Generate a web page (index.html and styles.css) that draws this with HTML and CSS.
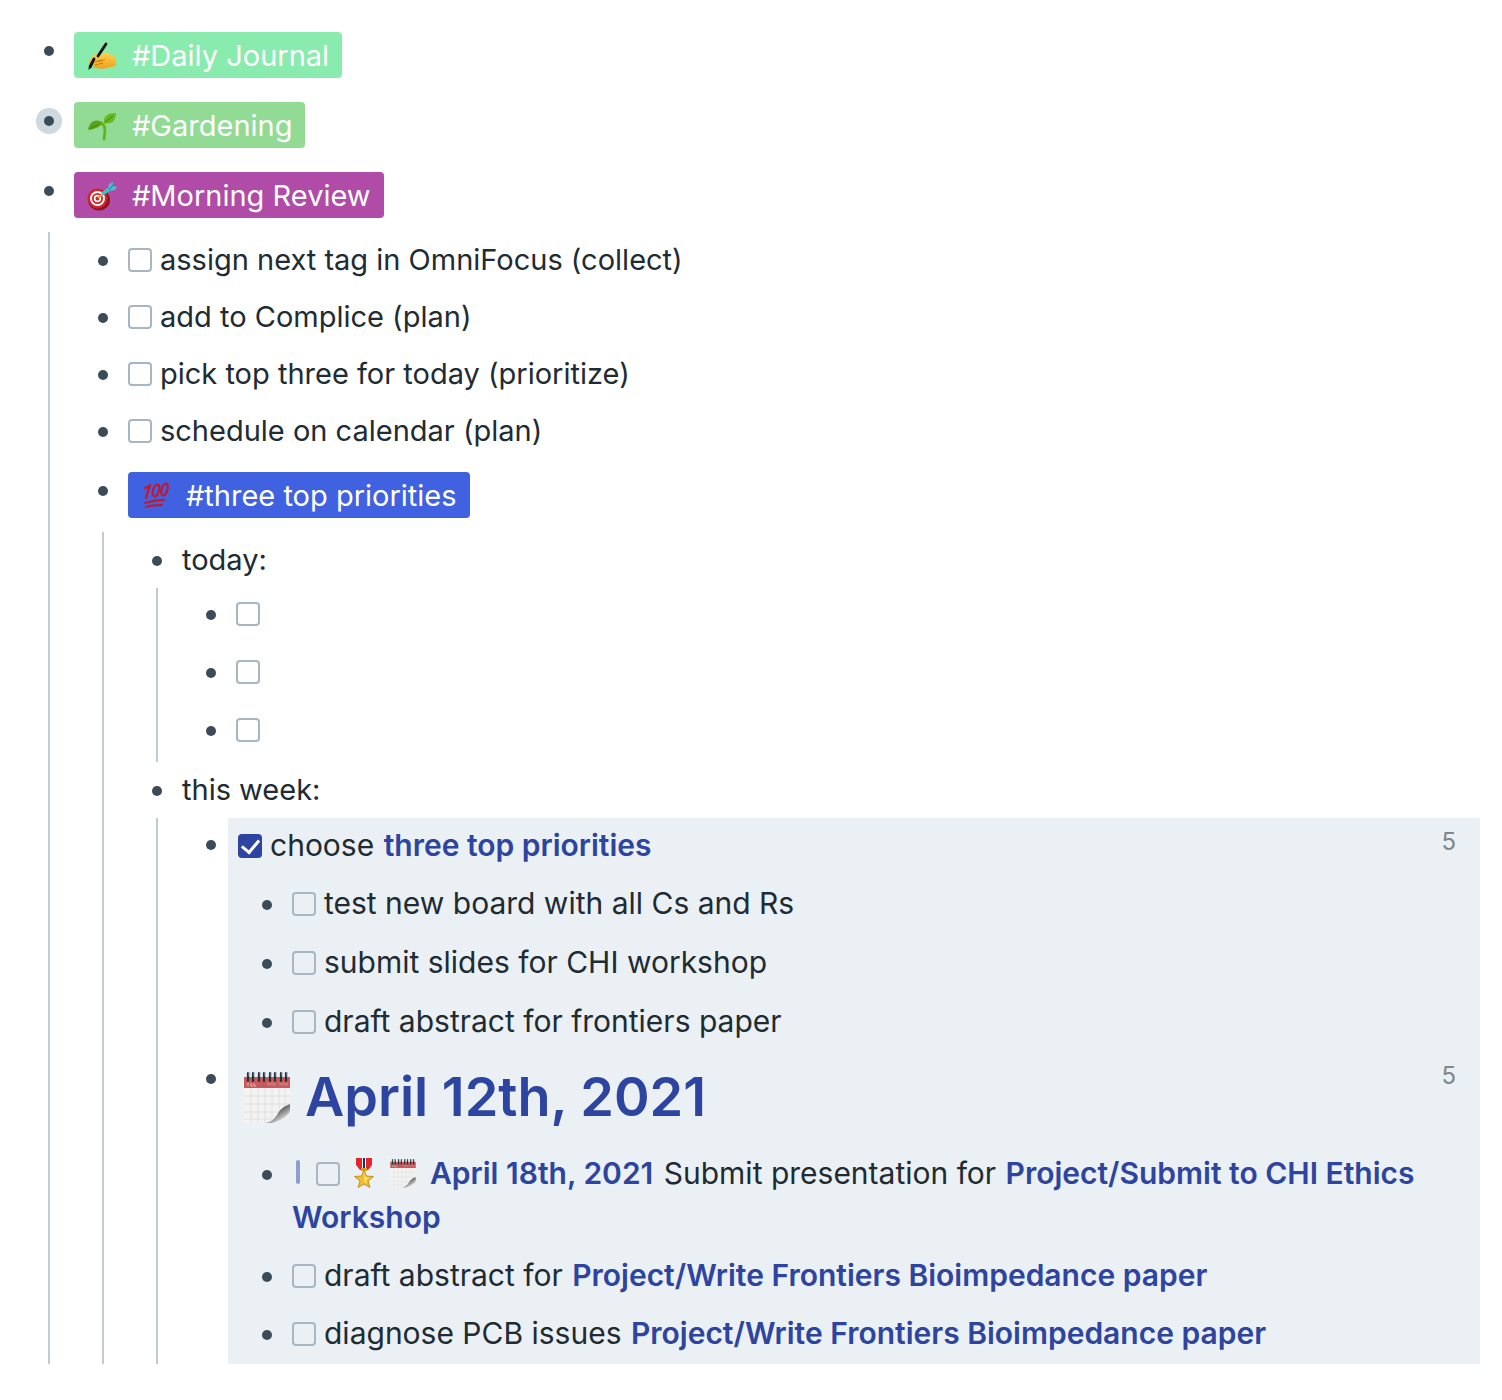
FILE: index.html
```html
<!DOCTYPE html>
<html lang="en">
<head>
<meta charset="utf-8">
<title>Daily outline</title>
<link rel="stylesheet" href="styles.css">
</head>
<body>
<svg class="sprite" width="0" height="0" aria-hidden="true">
  <defs>
    <linearGradient id="curl" x1="0.3" y1="0.3" x2="0.8" y2="0.9">
      <stop offset="0" stop-color="#555"/><stop offset="0.35" stop-color="#777"/><stop offset="1" stop-color="#f4f4f4"/>
    </linearGradient>
    <linearGradient id="skin" x1="0" y1="0" x2="0" y2="1">
      <stop offset="0" stop-color="#ffd34a"/><stop offset="1" stop-color="#f0a020"/>
    </linearGradient>
    <symbol id="calendar" viewBox="0 0 48 54">
      <path d="M1 7h46v28C43 41 37 44 33 47c-4 4-7 6-10 6H1z" fill="#f3f3f3"/>
      <path d="M8 18v35M15 18v35M22 18v35M29 18v30M36 18v27M42 18v20M1 26h46M1 34h46M1 42h38M1 49h28" stroke="#e0e0e0" fill="none"/>
      <path d="M1 7h46v11H1z" fill="#c65a5c"/>
      <path d="M5 12v4M8 13v3h2M11 13v3h2" stroke="#eab5b5" fill="none"/>
      <path d="M24 14h9M36 14h9" stroke="#cf7476" stroke-width="3"/>
      <path d="M47 34c-8 3-10 6-13 11-3 4-7 8-12 8h7c8-2 18-8 18-13z" fill="url(#curl)"/>
      <path d="M5 3v8M10 3v8M16 3v8M21 3v8M27 3v8M32 3v8M38 3v8M43 3v8" stroke="#26313c" stroke-width="2.2" stroke-linecap="round"/>
      <path d="M6 2v4M11 2v4M17 2v4M22 2v4M28 2v4M33 2v4M39 2v4M44 2v4" stroke="#8fa3b5" stroke-width="1"/>
    </symbol>
  </defs>
</svg>
<main class="page">
  <ul class="outline">
    <li>
      <div class="row row-tag"><span class="bullet"></span>
        <a class="tag tag-mint" href="#daily-journal">
          <svg class="emoji" viewBox="0 0 30 30" aria-hidden="true">
            <path d="M2 21c1-3 4-7 7-8 2-1 3 0 2 2l-2 3 6-5c3-2 5-2 7 0l7 3v9l-6 1c-4 2-9 2-14 1-3 0-3-1-2-2-3 0-4-1-3-2-2 0-3-1-2-2z" fill="url(#skin)"/>
            <path d="M8 21l7-2M8 24l8-2M11 19c1 2 4 1 7-1" stroke="#c97c0a" fill="none"/>
            <path d="M19 3L11 15M7 18L3 26" stroke="#111" stroke-width="2.8" stroke-linecap="round"/>
            <path d="M3 24l-2 5 4-3z" fill="#111"/>
          </svg>#Daily Journal</a>
      </div>
    </li>
    <li>
      <div class="row row-tag"><span class="bullet bullet-closed"></span>
        <a class="tag tag-green" href="#gardening">
          <svg class="emoji" viewBox="0 0 30 30" aria-hidden="true">
            <path d="M12 12c4 0 6 3 6 8l-1 8" stroke="#62b51b" stroke-width="2.8" fill="none" stroke-linecap="round"/>
            <path d="M17 12C16 5 21 2 29 2c0 8-5 12-12 10z" fill="#68b91f"/>
            <path d="M1 19c1-8 7-12 14-8-1 5-6 7-14 8z" fill="#5ca51b"/>
            <path d="M18 11l8-6M3 18l9-5" stroke="#438311" fill="none"/>
          </svg>#Gardening</a>
      </div>
    </li>
    <li>
      <div class="row row-tag"><span class="bullet"></span>
        <a class="tag tag-purple" href="#morning-review">
          <svg class="emoji" viewBox="0 0 30 30" aria-hidden="true">
            <ellipse cx="12" cy="19" rx="11" ry="10.5" fill="#8c1420"/>
            <circle cx="10.500" cy="17.500" r="10" fill="#d42229"/>
            <circle cx="10.500" cy="17.500" r="7.500" fill="#fff"/>
            <circle cx="10.500" cy="17.500" r="5.500" fill="#d42229"/>
            <circle cx="10.500" cy="17.500" r="3.700" fill="#fff"/>
            <circle cx="10.500" cy="17.500" r="2" fill="#d42229"/>
            <path d="M11 17l5-4" stroke="#e9a12a" stroke-width="2"/>
            <path d="M15 13l9-6" stroke="#3fc0cb" stroke-width="3.500"/>
            <path d="M21 8l1-5 4-2v4l4 1-2 3-5 1z" fill="#48bfca"/>
            <path d="M22 9l5-6" stroke="#1b7f93"/>
          </svg>#Morning Review</a>
      </div>
      <ul class="children">
        <li><div class="row"><span class="bullet"></span><label class="text"><input type="checkbox" class="check">assign next tag in OmniFocus (collect)</label></div></li>
        <li><div class="row"><span class="bullet"></span><label class="text"><input type="checkbox" class="check">add to Complice (plan)</label></div></li>
        <li><div class="row"><span class="bullet"></span><label class="text"><input type="checkbox" class="check">pick top three for today (prioritize)</label></div></li>
        <li><div class="row"><span class="bullet"></span><label class="text"><input type="checkbox" class="check">schedule on calendar (plan)</label></div></li>
        <li class="section">
          <div class="row row-tag"><span class="bullet"></span>
            <a class="tag tag-blue" href="#three-top-priorities">
              <svg class="emoji" viewBox="0 0 30 30" aria-hidden="true">
                <g fill="none" stroke="#d0121b" stroke-linecap="round" stroke-linejoin="round">
                  <path d="M4 7c2 0 4-2 5-3L5 17" stroke-width="2.200"/>
                  <ellipse cx="15" cy="9.500" rx="3" ry="6.200" transform="rotate(17 15 9.500)" stroke-width="2"/>
                  <ellipse cx="23.500" cy="8.500" rx="3" ry="6.200" transform="rotate(17 23.500 8.500)" stroke-width="2"/>
                  <path d="M4 22c6-2 12-3 19-3M5 26c5-2 10-2 16-2" stroke-width="1.800"/>
                </g>
              </svg>#three top priorities</a>
          </div>
          <ul class="children">
            <li>
              <div class="row row-parent"><span class="bullet"></span><span class="text">today:</span></div>
              <ul class="children">
                <li><div class="row row-empty"><span class="bullet"></span><span class="text"><input type="checkbox" class="check" aria-label="First priority today"></span></div></li>
                <li><div class="row row-empty"><span class="bullet"></span><span class="text"><input type="checkbox" class="check" aria-label="Second priority today"></span></div></li>
                <li><div class="row row-empty"><span class="bullet"></span><span class="text"><input type="checkbox" class="check" aria-label="Third priority today"></span></div></li>
              </ul>
            </li>
            <li>
              <div class="row row-parent"><span class="bullet"></span><span class="text">this week:</span></div>
              <ul class="children">
                <li class="embed-item"><span class="bullet"></span>
                  <div class="embed">
                    <div class="embed-head"><span class="text"><input type="checkbox" class="check" id="choose" checked><label for="choose">choose</label> <a class="ref" href="#three-top-priorities">three top priorities</a></span><span class="count">5</span></div>
                    <ul class="embed-list embed-list-loose">
                      <li><div class="row"><span class="bullet"></span><label class="text"><input type="checkbox" class="check">test new board with all Cs and Rs</label></div></li>
                      <li><div class="row"><span class="bullet"></span><label class="text"><input type="checkbox" class="check">submit slides for CHI workshop</label></div></li>
                      <li><div class="row"><span class="bullet"></span><label class="text"><input type="checkbox" class="check">draft abstract for frontiers paper</label></div></li>
                    </ul>
                  </div>
                </li>
                <li class="embed-item"><span class="bullet"></span>
                  <div class="embed">
                    <div class="embed-head"><h1 class="date"><svg class="date-icon" aria-hidden="true"><use href="#calendar"/></svg><a href="#april-12th-2021">April 12th, 2021</a></h1><span class="count">5</span></div>
                    <ul class="embed-list">
                      <li><div class="row"><span class="bullet"></span><span class="text"><span class="priority"></span><input type="checkbox" class="check" id="submit"><svg class="emoji medal" viewBox="0 0 22 30" aria-hidden="true">
                        <path d="M3 0h16v7l-4 5H7L3 7z" fill="#e3262c"/>
                        <path d="M9 0h4v12H9z" fill="#fff"/><path d="M10 0h2v12h-2z" fill="#1f2d6e"/>
                        <path d="M8 10h6v3H8z" fill="#d8a21c"/>
                        <path d="M11 12l2.500 6 7 .5-5.500 4.500 2 6.500-6-3.500-6 3.500 2-6.500L1.500 18.500 8.500 18z" fill="#f2bd28" stroke="#b98212" stroke-width=".8"/>
                        <path d="M11 14l1.500 5 4 .5-3.500 2.500 1 4-3-2.500z" fill="#ffdf6b"/>
                      </svg><svg class="emoji calendar" aria-hidden="true"><use href="#calendar"/></svg><a class="ref" href="#april-18th-2021">April 18th, 2021</a> <label for="submit">Submit presentation for</label> <a class="ref" href="#chi-ethics">Project/Submit to CHI Ethics Workshop</a></span></div></li>
                      <li><div class="row"><span class="bullet"></span><span class="text"><input type="checkbox" class="check" id="draft"><label for="draft">draft abstract for</label> <a class="ref" href="#frontiers">Project/Write Frontiers Bioimpedance paper</a></span></div></li>
                      <li><div class="row"><span class="bullet"></span><span class="text"><input type="checkbox" class="check" id="diagnose"><label for="diagnose">diagnose PCB issues</label> <a class="ref" href="#frontiers">Project/Write Frontiers Bioimpedance paper</a></span></div></li>
                    </ul>
                  </div>
                </li>
              </ul>
            </li>
          </ul>
        </li>
      </ul>
    </li>
  </ul>
</main>
</body>
</html>
```
FILE: styles.css
```css
* { box-sizing: border-box; }

body {
  margin: 0;
  background: #fff;
  color: #202b33;
  font: 29px/46px Inter, "Liberation Sans", sans-serif;
}

ul { list-style: none; margin: 0; padding: 0; }
a { color: inherit; text-decoration: none; }
.sprite { position: absolute; }

.page { padding: 22px 22px 36px 44px; }

.row {
  display: flex;
  align-items: flex-start;
  gap: 20px;
  padding: 5px 0 6px;
}
.row-tag { padding-bottom: 14px; }
.row-parent { padding-bottom: 5px; }
.row-empty { padding: 3px 0 9px; }
.section { padding-top: 2px; }

.bullet {
  flex: none;
  width: 10px;
  height: 10px;
  margin-top: 19px;
  border-radius: 50%;
  background: #3c4b58;
}
.bullet-closed { box-shadow: 0 0 0 8px #ced9e0; }

.text { flex: 1; min-width: 0; }

.children {
  margin-left: 4px;
  padding-left: 48px;
  border-left: 2px solid #bfccd6;
}

.tag {
  display: flex;
  align-items: center;
  gap: 15px;
  height: 46px;
  margin-top: 5px;
  padding: 2px 13px 0;
  border-radius: 4px;
  color: #fff;
}
.tag-mint { background: #8aebae; }
.tag-green { background: #91db95; }
.tag-purple { background: #b04ba7; }
.tag-blue { background: #4062e0; }

.emoji { flex: none; width: 30px; height: 30px; }

.check {
  appearance: none;
  width: 24px;
  height: 24px;
  margin: 0 8px 0 0;
  border: 2px solid #a7b6c2;
  border-radius: 4px;
  vertical-align: -2px;
}
/* The tick gives the ticked box a baseline of its own, higher than its edge. */
.check:checked {
  display: inline-grid;
  place-items: center;
  padding-bottom: 2px;
  border: 0;
  background: #2d44a0;
  vertical-align: 3px;
}
.check:checked::after {
  content: "";
  width: 8px;
  height: 14px;
  border: solid #fff;
  border-width: 0 3px 3px 0;
  transform: rotate(40deg);
}

.ref { margin: 0 2px 0 1px; color: #2d44a0; font-weight: 600; }

.embed-item { display: flex; align-items: flex-start; gap: 12px; }
.embed-item > .bullet { margin-top: 22px; }
.embed {
  flex: 1;
  min-width: 0;
  padding: 5px 24px 0 10px;
  background: #ebf0f4;
  font-size: 30px;
  line-height: 44px;
}
.embed-head { display: flex; align-items: flex-start; padding-bottom: 9px; }
.embed-list { padding-left: 24px; }
.embed-list .row { padding-bottom: 9px; }
.embed-list-loose { display: grid; gap: 1px; }

.count {
  color: #80868b;
  font-size: 24px;
  line-height: 38px;
}

.date {
  display: flex;
  flex: 1;
  align-items: center;
  gap: 13px;
  margin: 0;
  color: #2d44a0;
  font-size: 54px;
  font-weight: 600;
  line-height: 80px;
}
.date-icon { width: 50px; height: 54px; margin-left: 4px; }

.priority {
  display: inline-block;
  width: 4px;
  height: 24px;
  margin: 0 16px 0 4px;
  border-radius: 2px;
  background: #8c9fd0;
}
.medal { width: 22px; margin: 0 14px 0 5px; vertical-align: -4px; }
.calendar { width: 28px; margin-right: 12px; vertical-align: -4px; }
```
